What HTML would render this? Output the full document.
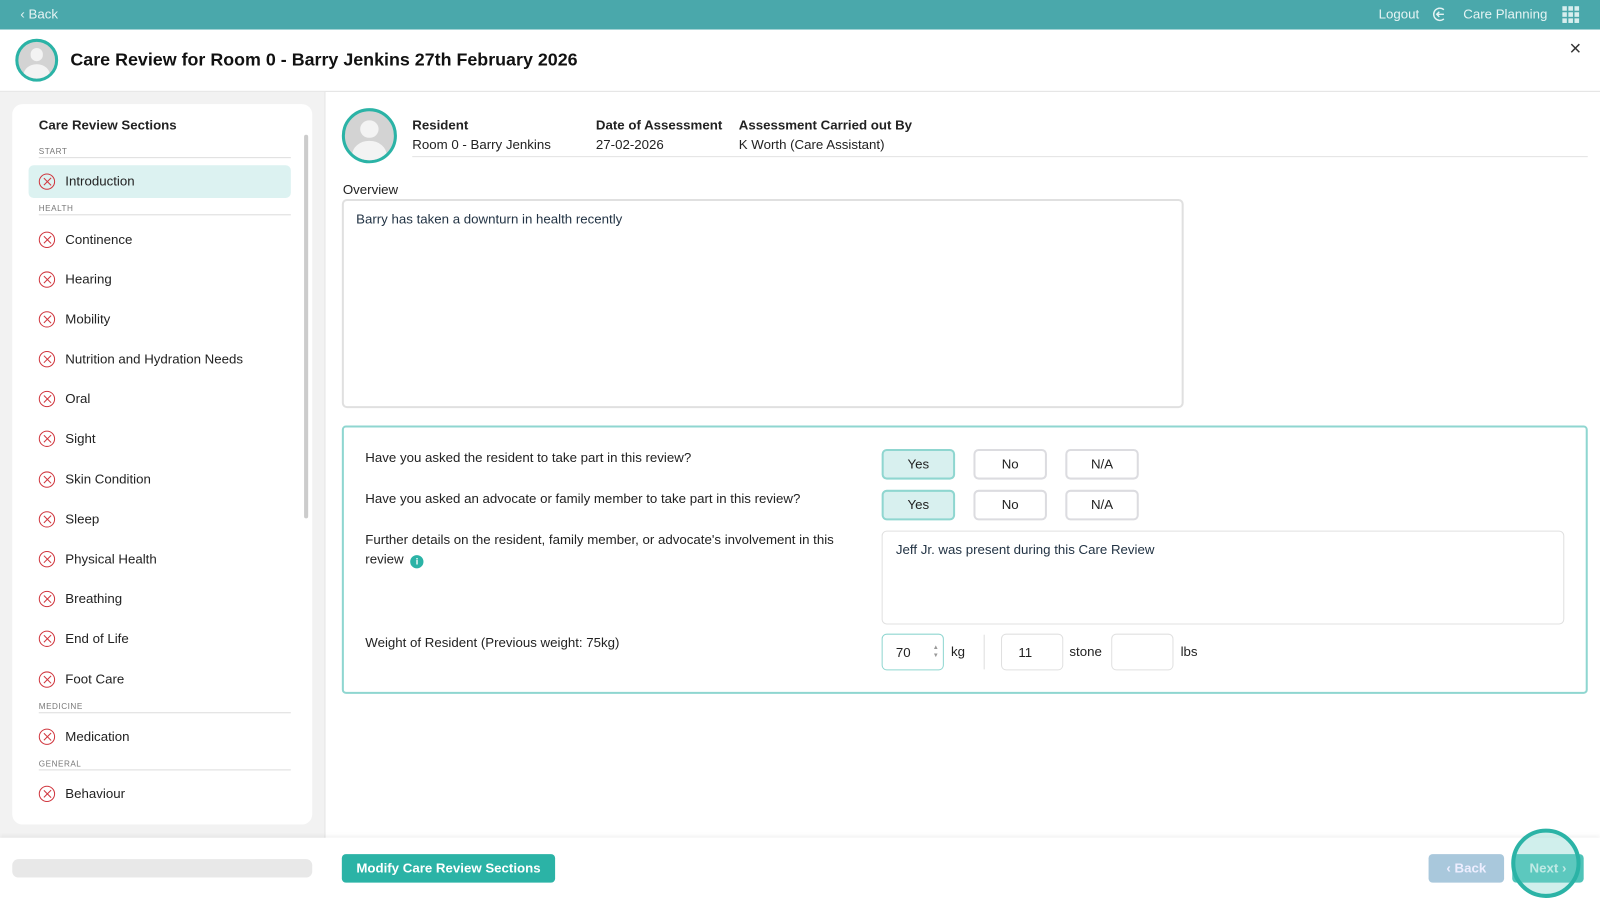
<!DOCTYPE html>
<html><head><style>
*{box-sizing:border-box;margin:0;padding:0}
body{width:1600px;height:900px;overflow:hidden;font-family:"Liberation Sans",sans-serif;color:#222;background:#fff;position:relative}
#w{position:absolute;left:0;top:0;width:1568px;height:882px;transform:scale(1.020408);transform-origin:0 0}
.top{position:absolute;left:0;top:0;width:1568px;height:29px;background:#4aa8ab;color:#e6f4f4;font-size:13px}
.hdr{position:absolute;top:29px;left:0;width:1568px;height:61px;border-bottom:1px solid #e2e2e2;background:#fff}
.av{position:absolute;border:3px solid #2bb3a6;border-radius:50%;background:#d3d3d3;overflow:hidden}
.av:before{content:"";position:absolute;left:32%;top:18%;width:36%;height:36%;background:#f3f3f3;border-radius:50%}
.av:after{content:"";position:absolute;left:15%;top:60%;width:70%;height:60%;background:#f3f3f3;border-radius:50% 50% 0 0}
.left{position:absolute;left:0;top:90px;width:319px;height:732px;background:#f2f2f2;border-right:1px solid #e4e4e4}
.panel{position:absolute;left:12px;top:12px;width:294px;height:706px;background:#fff;border-radius:10px}
.it{position:absolute;left:16px;width:257px;height:32px;font-size:13px;line-height:32px;padding-left:36px;color:#222}
.it i{position:absolute;left:10px;top:8px;width:16px;height:16px;border:1.3px solid #d0363e;border-radius:50%}
.it i:before,.it i:after{content:"";position:absolute;left:6.5px;top:2px;width:1.3px;height:10px;background:#d0363e;transform:rotate(45deg)}
.it i:after{transform:rotate(-45deg)}
.sh{position:absolute;left:26px;width:247px;font-size:8px;color:#777;letter-spacing:.5px;border-bottom:1px solid #ddd;padding-bottom:1px}
.b{font-weight:bold;font-size:13px}
.btn{position:absolute;width:72px;height:30px;border:2px solid #dcdce0;border-radius:5px;text-align:center;line-height:26px;font-size:13px;background:#fff}
.btn.y{background:#d8f0ef;border-color:#8fd6d0}
.q{position:absolute;left:358px;font-size:13px;color:#222;line-height:19px}
.inp{position:absolute;border:1px solid #e0e0e0;border-radius:5px;background:#fff}
</style></head><body><div id="w">
<div class="top"><span style="position:absolute;left:20px;top:6px">‹ Back</span>
<span style="position:absolute;left:1351px;top:6px">Logout</span>
<svg style="position:absolute;left:1403px;top:6px" width="16" height="16" viewBox="0 0 16 16"><path d="M12 3.5A6 6 0 1 0 12 12.5" fill="none" stroke="#e6f4f4" stroke-width="1.4"/><path d="M12 8H5M7.5 5.5L5 8l2.5 2.5" fill="none" stroke="#e6f4f4" stroke-width="1.4"/></svg>
<span style="position:absolute;left:1434px;top:6px">Care Planning</span>
<svg style="position:absolute;left:1531px;top:6px" width="17" height="17"><g fill="#d7eeee"><rect x="0" y="0" width="4.5" height="4.5"/><rect x="6" y="0" width="4.5" height="4.5"/><rect x="12" y="0" width="4.5" height="4.5"/><rect x="0" y="6" width="4.5" height="4.5"/><rect x="6" y="6" width="4.5" height="4.5"/><rect x="12" y="6" width="4.5" height="4.5"/><rect x="0" y="12" width="4.5" height="4.5"/><rect x="6" y="12" width="4.5" height="4.5"/><rect x="12" y="12" width="4.5" height="4.5"/></g></svg></div>
<div class="hdr"><div class="av" style="left:15px;top:9px;width:42px;height:42px"></div>
<div style="position:absolute;left:69px;top:19px;font-size:17.5px;font-weight:bold;color:#111">Care Review for Room 0 - Barry Jenkins 27th February 2026</div>
<div style="position:absolute;left:1538px;top:8px;font-size:20px;color:#333">×</div></div>
<div class="left"><div class="panel">
<div style="position:absolute;left:26px;top:13px;font-size:13px;font-weight:bold;color:#222">Care Review Sections</div>
<div style="position:absolute;left:286px;top:30px;width:4px;height:376px;background:#ccc;border-radius:2px"></div>
<div class="sh" style="top:42px">START</div>
<div class="it" style="top:60px;background:#dcf2f1;border-radius:5px"><i></i>Introduction</div>
<div class="sh" style="top:98px">HEALTH</div>
<div class="it" style="top:117px"><i></i>Continence</div>
<div class="it" style="top:156px"><i></i>Hearing</div>
<div class="it" style="top:195px"><i></i>Mobility</div>
<div class="it" style="top:234px"><i></i>Nutrition and Hydration Needs</div>
<div class="it" style="top:273px"><i></i>Oral</div>
<div class="it" style="top:312px"><i></i>Sight</div>
<div class="it" style="top:352px"><i></i>Skin Condition</div>
<div class="it" style="top:391px"><i></i>Sleep</div>
<div class="it" style="top:430px"><i></i>Physical Health</div>
<div class="it" style="top:469px"><i></i>Breathing</div>
<div class="it" style="top:508px"><i></i>End of Life</div>
<div class="it" style="top:548px"><i></i>Foot Care</div>
<div class="sh" style="top:586px">MEDICINE</div>
<div class="it" style="top:604px"><i></i>Medication</div>
<div class="sh" style="top:642px">GENERAL</div>
<div class="it" style="top:660px"><i></i>Behaviour</div>
</div></div>
<div class="av" style="left:335px;top:106px;width:54px;height:54px"></div>
<div style="position:absolute;left:404px;top:113px;line-height:19px;font-size:13px"><div class="b">Resident</div>Room 0 - Barry Jenkins</div>
<div style="position:absolute;left:584px;top:113px;line-height:19px;font-size:13px"><div class="b">Date of Assessment</div>27-02-2026</div>
<div style="position:absolute;left:724px;top:113px;line-height:19px;font-size:13px"><div class="b">Assessment Carried out By</div>K Worth (Care Assistant)</div>
<div style="position:absolute;left:404px;top:153px;width:1152px;height:1px;background:#e2e2e2"></div>
<div style="position:absolute;left:336px;top:178px;font-size:13px">Overview</div>
<div class="inp" style="left:335px;top:195px;width:825px;height:205px;border-width:2px"><div style="padding:10px 12px;font-size:13px;color:#234">Barry has taken a downturn in health recently</div></div>
<div style="position:absolute;left:335px;top:417px;width:1221px;height:263px;border:2px solid #8fd6d0;border-radius:4px"></div>
<div class="q" style="top:439px">Have you asked the resident to take part in this review?</div>
<div class="q" style="top:479px">Have you asked an advocate or family member to take part in this review?</div>
<div class="q" style="top:519px;width:480px">Further details on the resident, family member, or advocate's involvement in this review <span style="display:inline-block;width:13px;height:13px;border-radius:50%;background:#2bb3a6;color:#fff;font-size:9px;line-height:13px;text-align:center;font-weight:bold;vertical-align:-1px;margin-left:3px">i</span></div>
<div class="q" style="top:620px">Weight of Resident (Previous weight: 75kg)</div>
<div class="btn y" style="left:864px;top:440px">Yes</div><div class="btn" style="left:954px;top:440px">No</div><div class="btn" style="left:1044px;top:440px">N/A</div>
<div class="btn y" style="left:864px;top:480px">Yes</div><div class="btn" style="left:954px;top:480px">No</div><div class="btn" style="left:1044px;top:480px">N/A</div>
<div class="inp" style="left:864px;top:520px;width:669px;height:92px"><div style="padding:10px 13px;font-size:13px;color:#234">Jeff Jr. was present during this Care Review</div></div>
<div class="inp" style="left:864px;top:621px;width:61px;height:36px;border-color:#8fd6d0;font-size:13px;padding:10px 13px">70<span style="position:absolute;right:4px;top:9px;font-size:6px;color:#999;line-height:8px">▲<br>▼</span></div>
<div style="position:absolute;left:932px;top:631px;font-size:13px">kg</div>
<div style="position:absolute;left:964px;top:622px;width:1px;height:34px;background:#ddd"></div>
<div class="inp" style="left:981px;top:621px;width:61px;height:36px;font-size:13px;padding:10px 16px">11</div>
<div style="position:absolute;left:1048px;top:631px;font-size:13px">stone</div>
<div class="inp" style="left:1089px;top:621px;width:61px;height:36px"></div>
<div style="position:absolute;left:1157px;top:631px;font-size:13px">lbs</div>
<div style="position:absolute;left:0;top:821px;width:1568px;height:61px;background:#fff;box-shadow:0 -2px 4px rgba(0,0,0,.05)"></div>
<div style="position:absolute;left:12px;top:842px;width:294px;height:18px;background:#e8e8e8;border-radius:6px"></div>
<div style="position:absolute;left:335px;top:837px;width:209px;height:28px;background:#2bb3a6;border-radius:4px;color:#fff;font-size:13px;font-weight:bold;text-align:center;line-height:28px">Modify Care Review Sections</div>
<div style="position:absolute;left:1400px;top:837px;width:74px;height:28px;background:#a9c8dc;border-radius:4px;color:#eef;font-size:13px;font-weight:bold;text-align:center;line-height:28px">‹ Back</div>
<div style="position:absolute;left:1482px;top:837px;width:70px;height:28px;background:#4ec3b8;border-radius:4px;color:#e6f7f5;font-size:13px;font-weight:bold;text-align:center;line-height:28px">Next ›</div>
<div style="position:absolute;left:1481px;top:812px;width:68px;height:68px;border:4px solid #2bb3a6;border-radius:50%;background:rgba(120,210,200,.35)"></div>
</div></body></html>
